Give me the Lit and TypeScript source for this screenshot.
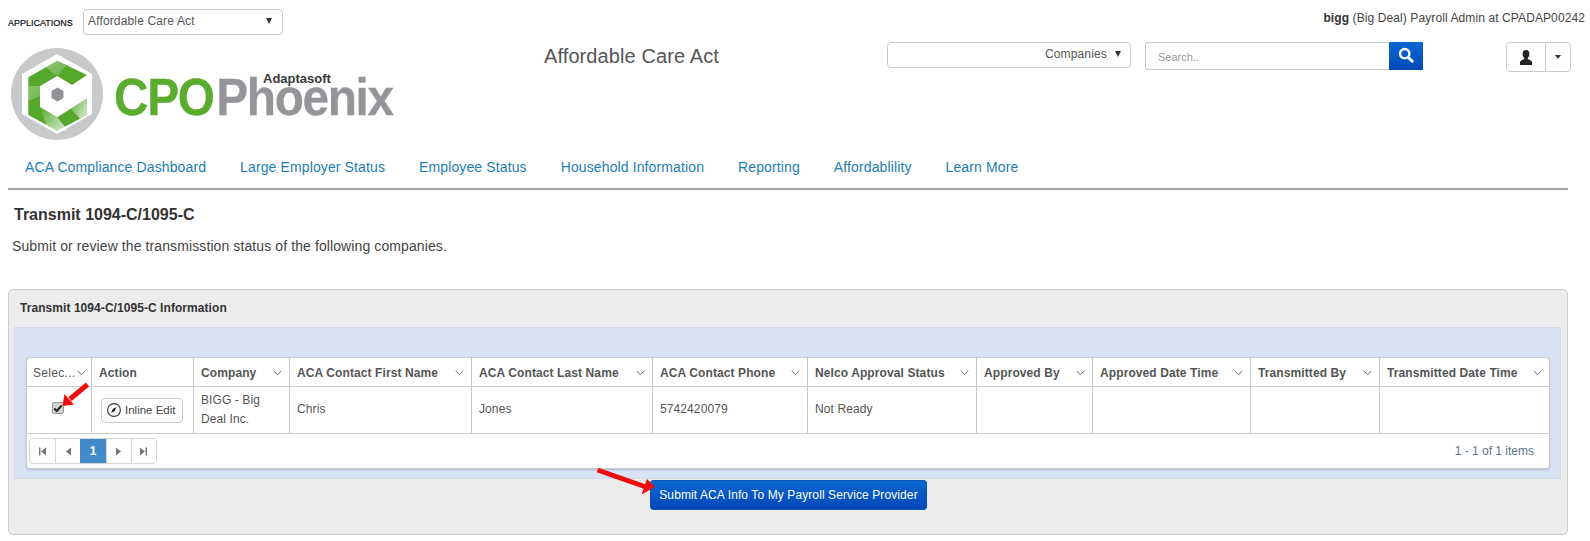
import { LitElement, html, css, svg } from "lit";
import { customElement } from "lit/decorators.js";

const NAV = [
  "ACA Compliance Dashboard",
  "Large Employer Status",
  "Employee Status",
  "Household Information",
  "Reporting",
  "Affordablility",
  "Learn More",
];

const COLUMNS = [
  { title: "Selec...", sort: true, cls: "narrow" },
  { title: "Action", sort: false },
  { title: "Company", sort: true },
  { title: "ACA Contact First Name", sort: true },
  { title: "ACA Contact Last Name", sort: true },
  { title: "ACA Contact Phone", sort: true },
  { title: "Nelco Approval Status", sort: true },
  { title: "Approved By", sort: true },
  { title: "Approved Date Time", sort: true },
  { title: "Transmitted By", sort: true },
  { title: "Transmitted Date Time", sort: true },
];

const chevron = html`<svg class="chev" width="9" height="6" viewBox="0 0 9 6"><path d="M.7 1l3.8 3.6L8.3 1" fill="none" stroke="#666" stroke-width="1"/></svg>`;

const pagerIcons = [
  svg`<path d="M2 1.500h1.400v8H2zM9 1.500v8L4 5.500z"/>`,
  svg`<path d="M8 1.500v8L3 5.500z"/>`,
  svg`<path d="M3 1.500v8l5-4z"/>`,
  svg`<path d="M2 1.500v8l5-4zM7.600 1.500H9v8H7.600z"/>`,
];

@customElement("app-root")
export class AppRoot extends LitElement {
  static styles = css`
    :host {
      display: block;
      position: relative;
      width: 1590px;
      height: 541px;
      background: #fff;
      overflow: hidden;
      font-family: "Liberation Sans", Arial, sans-serif;
      font-size: 12px;
      color: #555;
    }
    .top {
      display: flex;
      justify-content: space-between;
      height: 42px;
      padding: 9px 5px 0 8px;
      box-sizing: border-box;
    }
    .apps {
      display: flex;
      align-items: flex-start;
    }
    .apps-label {
      width: 75px;
      margin-top: 9px;
      font-size: 9px;
      line-height: 10px;
      color: #111;
      -webkit-text-stroke: 0.2px #111;
    }
    .select {
      display: flex;
      align-items: center;
      justify-content: space-between;
      box-sizing: border-box;
      border: 1px solid #ccc;
      border-radius: 4px;
      background: #fff;
      color: #555;
      font-size: 12px;
      letter-spacing: 0.15px;
    }
    .select i {
      width: 0;
      height: 0;
      border-left: 3.500px solid transparent;
      border-right: 3.500px solid transparent;
      border-top: 6px solid #333;
    }
    .app-select {
      width: 200px;
      height: 26px;
      padding: 0 10px 2px 4px;
    }
    .user-line {
      margin-top: 1px;
      font-size: 12px;
      line-height: 16px;
      letter-spacing: 0.1px;
      color: #444;
    }
    .user-line b {
      color: #333;
    }
    .brand {
      display: grid;
      grid-template-columns: 532px 344px 258px 361px 65px;
      height: 98px;
      padding-left: 11px;
    }
    .logo {
      position: relative;
      display: flex;
      align-items: flex-start;
      margin-top: 6px;
    }
    .logo svg {
      width: 93px;
      height: 93px;
      flex: none;
    }
    .wordmark {
      margin: 19px 0 0 10px;
      font-size: 52px;
      line-height: 60px;
      font-weight: 700;
      letter-spacing: -1.500px;
      white-space: nowrap;
      transform: scaleX(0.92);
      transform-origin: left center;
      -webkit-text-stroke: 0.3px currentColor;
      color: #939598;
    }
    .wordmark span {
      color: #5aac2e;
      margin-right: 3px;
    }
    .maker {
      position: absolute;
      left: 252px;
      top: 23px;
      font-size: 13px;
      line-height: 16px;
      font-weight: 700;
      color: #3a3a3a;
    }
    .title {
      padding-left: 1px;
      font-size: 20px;
      line-height: 28px;
      letter-spacing: 0.1px;
      color: #555;
    }
    .company-select {
      width: 244px;
      height: 26px;
      justify-content: flex-end;
      gap: 8px;
      padding: 0 9px 3px 0;
    }
    .search {
      display: flex;
      height: 28px;
    }
    .search-input {
      width: 244px;
      box-sizing: border-box;
      border: 1px solid #ccc;
      border-right: 0;
      border-radius: 3px 0 0 3px;
      padding: 7px 12px;
      font-size: 11px;
      line-height: 14px;
      color: #999;
    }
    .search-btn {
      display: flex;
      width: 34px;
      align-items: center;
      justify-content: center;
      padding-bottom: 3px;
      box-sizing: border-box;
      background: linear-gradient(#0b68d0, #0049b8);
    }
    .user-btn {
      display: flex;
      width: 65px;
      height: 30px;
      box-sizing: border-box;
      border: 1px solid #ccc;
      border-radius: 4px;
    }
    .user-btn div {
      display: flex;
      align-items: center;
      justify-content: center;
    }
    .user-btn .who {
      width: 38px;
      border-right: 1px solid #ccc;
    }
    .user-btn .more {
      flex: 1;
    }
    .user-btn .more i {
      width: 0;
      height: 0;
      border-left: 3.500px solid transparent;
      border-right: 3.500px solid transparent;
      border-top: 4px solid #333;
    }
    nav {
      display: flex;
      gap: 34px;
      height: 50px;
      margin: 0 22px 0 8px;
      padding: 17px 0 0 17px;
      box-sizing: border-box;
      border-bottom: 2px solid #a5a5a5;
    }
    nav a {
      font-size: 14px;
      line-height: 20px;
      color: #1c7db5;
      letter-spacing: 0.12px;
    }
    h2 {
      margin: 15px 0 0 14px;
      font-size: 16px;
      line-height: 20px;
      font-weight: 700;
      color: #333;
    }
    .lead {
      margin: 11px 0 0 12px;
      font-size: 14px;
      line-height: 20px;
      letter-spacing: 0.1px;
      color: #444;
    }
    .panel {
      position: relative;
      margin: 33px 22px 0 8px;
      height: 246px;
      box-sizing: border-box;
      padding: 0 6px 0 5px;
      background: #ececec;
      border: 1px solid #ccc;
      border-radius: 5px;
    }
    .panel-title {
      padding-left: 6px;
      height: 37px;
      font-size: 12px;
      font-weight: 700;
      line-height: 36px;
      letter-spacing: 0.06px;
      color: #333;
    }
    .well {
      height: 152px;
      box-sizing: border-box;
      padding: 29px 10px 0 11px;
      background: #d8e3f4;
      border: 1px solid #d3dcea;
    }
    .grid {
      height: 112px;
      box-sizing: border-box;
      background: #fff;
      border: 1px solid #ccc;
      border-radius: 4px;
      box-shadow: 0 1px 2px rgba(0, 0, 0, 0.2);
    }
    .row {
      display: grid;
      box-sizing: border-box;
      grid-template-columns: 64px 102px 96px 182px 181px 155px 169px 116px 158px 129px 170px;
    }
    .head {
      height: 29px;
      border-bottom: 1px solid #ccc;
    }
    .body {
      height: 47px;
      border-bottom: 1px solid #ccc;
    }
    .th,
    .td {
      display: flex;
      align-items: center;
      box-sizing: border-box;
      padding: 0 7px;
      border-left: 1px solid #ccc;
      min-width: 0;
      letter-spacing: 0.1px;
    }
    .th:first-child,
    .td:first-child {
      border-left: 0;
    }
    .th {
      justify-content: space-between;
      padding-top: 1px;
      font-weight: 700;
      color: #555;
      white-space: nowrap;
    }
    .th.narrow {
      font-weight: 400;
      padding: 1px 5px 0 6px;
      letter-spacing: 0.3px;
    }
    .td {
      padding-bottom: 1px;
      line-height: 19px;
      color: #555;
    }
    .td.check {
      justify-content: center;
      padding: 0 2px 4px 0;
    }
    .td.edit {
      padding-bottom: 0;
    }
    .checkbox {
      display: flex;
      align-items: center;
      justify-content: center;
      width: 12px;
      height: 12px;
      box-sizing: border-box;
      background: #d4d4d4;
      border: 1px solid #999;
      border-radius: 2px;
    }
    .inline-edit {
      display: flex;
      align-items: center;
      gap: 4px;
      width: 82px;
      height: 25px;
      margin-left: 2px;
      padding: 0 0 0 5px;
      box-sizing: border-box;
      background: #fff;
      border: 1px solid #ccc;
      border-radius: 4px;
      font-size: 11.500px;
      letter-spacing: 0;
      white-space: nowrap;
      color: #444;
    }
    .foot {
      display: flex;
      align-items: center;
      justify-content: space-between;
      height: 34px;
      padding: 0 15px 0 2px;
      box-sizing: border-box;
    }
    .pager {
      display: flex;
      height: 26px;
      box-sizing: border-box;
      border: 1px solid #d5d5d5;
      border-radius: 4px;
    }
    .pager div {
      display: flex;
      align-items: center;
      justify-content: center;
      width: 25.200px;
      border-left: 1px solid #d5d5d5;
      box-sizing: border-box;
    }
    .pager div:first-child {
      border-left: 0;
    }
    .pager svg {
      fill: #777;
    }
    .pager .current {
      background: #428bca;
      border-left: 0;
      color: #fff;
      font-weight: 700;
    }
    .count {
      color: #5c7488;
    }
    .actions {
      display: flex;
      justify-content: center;
      padding: 1px 0 0 2px;
    }
    .submit {
      width: 277px;
      height: 30px;
      box-sizing: border-box;
      border: 1px solid #0a55b5;
      border-radius: 3px;
      background: linear-gradient(#0b68d0, #0046b8);
      color: #fff;
      font-size: 12px;
      line-height: 28px;
      letter-spacing: 0.1px;
      text-align: center;
    }
    .arrow {
      position: absolute;
      left: 0;
      top: 0;
      pointer-events: none;
    }
  `;

  render() {
    return html`
      <div class="top">
        <div class="apps">
          <div class="apps-label">APPLICATIONS</div>
          <div class="select app-select">Affordable Care Act<i></i></div>
        </div>
        <div class="user-line"><b>bigg</b> (Big Deal) Payroll Admin at CPADAP00242</div>
      </div>

      <div class="brand">
        <div class="logo">
          ${this.renderMark()}
          <div class="wordmark"><span>CPO</span>Phoenix</div>
          <div class="maker">Adaptasoft</div>
        </div>
        <div class="title">Affordable Care Act</div>
        <div class="select company-select">Companies<i></i></div>
        <div class="search">
          <div class="search-input">Search..</div>
          <div class="search-btn">
            <svg width="16" height="16" viewBox="0 0 16 16"><circle cx="6.700" cy="6.700" r="4.700" fill="none" stroke="#fff" stroke-width="2.400"/><path d="M10.200 10.200l4 4" stroke="#fff" stroke-width="3" stroke-linecap="round"/></svg>
          </div>
        </div>
        <div class="user-btn">
          <div class="who">
            <svg width="14" height="15" viewBox="0 0 14 15"><path d="M7 0c2.200 0 3.400 1.600 3.400 3.700 0 1.700-.7 3.300-1.500 4.200-.3.400-.2 1 .3 1.300 1.500.7 3.800 1.300 3.800 3.100V15H1v-2.700c0-1.800 2.300-2.400 3.800-3.100.5-.3.600-.9.300-1.300-.8-.9-1.500-2.500-1.500-4.200C3.600 1.600 4.800 0 7 0z" fill="#222"/></svg>
          </div>
          <div class="more"><i></i></div>
        </div>
      </div>

      <nav>${NAV.map((item) => html`<a>${item}</a>`)}</nav>

      <h2>Transmit 1094-C/1095-C</h2>
      <p class="lead">Submit or review the transmisstion status of the following companies.</p>

      <section class="panel">
        <div class="panel-title">Transmit 1094-C/1095-C Information</div>
        <div class="well">
          <div class="grid">
            <div class="row head">
              ${COLUMNS.map(
                (c) => html`<div class="th ${c.cls ?? ""}">${c.title}${c.sort ? chevron : ""}</div>`
              )}
            </div>
            <div class="row body">
              <div class="td check">
                <span class="checkbox">
                  <svg width="10" height="9" viewBox="0 0 10 9"><path d="M1.200 4.500l2.500 2.500 5-5.500" fill="none" stroke="#222" stroke-width="2"/></svg>
                </span>
              </div>
              <div class="td edit">
                <div class="inline-edit">
                  <svg width="14" height="14" viewBox="1 1 14 14"><circle cx="8" cy="8" r="6.400" fill="none" stroke="#333" stroke-width="1.100"/><path d="M5.200 10.800l1.500-3.800 3.900-1.900-1.800 3.900z" fill="#222"/></svg>
                  Inline Edit
                </div>
              </div>
              <div class="td">BIGG - Big Deal Inc.</div>
              <div class="td">Chris</div>
              <div class="td">Jones</div>
              <div class="td">5742420079</div>
              <div class="td">Not Ready</div>
              <div class="td"></div>
              <div class="td"></div>
              <div class="td"></div>
              <div class="td"></div>
            </div>
            <div class="foot">
              <div class="pager">
                <div>${this.pagerIcon(0)}</div>
                <div>${this.pagerIcon(1)}</div>
                <div class="current">1</div>
                <div>${this.pagerIcon(2)}</div>
                <div>${this.pagerIcon(3)}</div>
              </div>
              <div class="count">1 - 1 of 1 items</div>
            </div>
          </div>
        </div>
        <div class="actions">
          <div class="submit">Submit ACA Info To My Payroll Service Provider</div>
        </div>
      </section>

      <svg class="arrow" width="1590" height="541" viewBox="0 0 1590 541">
        <path d="M87.500 384.500L70 399" stroke="#f00d0d" stroke-width="5" fill="none"/>
        <path d="M62.500 406l2-12 9.500 10.500z" fill="#f00d0d"/>
        <path d="M597.500 470L646 487" stroke="#f00d0d" stroke-width="5" fill="none"/>
        <path d="M655 487l-8-8-5.500 15.500z" fill="#f00d0d"/>
      </svg>
    `;
  }

  private pagerIcon(i: number) {
    return html`<svg width="11" height="11" viewBox="0 0 11 11">${pagerIcons[i]}</svg>`;
  }

  // logo mark, coordinates follow the picture (page offset 11,48)
  private renderMark() {
    return html`<svg viewBox="11 48 93 93">
      <defs>
        <linearGradient id="sheen" x1="0" y1="0" x2="1" y2="1">
          <stop offset="0" stop-color="#fff" stop-opacity="0.45"/>
          <stop offset="1" stop-color="#fff" stop-opacity="0"/>
        </linearGradient>
        <linearGradient id="fade" x1="0" y1="0" x2="1" y2="0.6">
          <stop offset="0" stop-color="#fff" stop-opacity="0"/>
          <stop offset="1" stop-color="#fff" stop-opacity="0.7"/>
        </linearGradient>
      </defs>
      <circle cx="57" cy="94" r="46" fill="#c8c9cb"/>
      <path d="M57 54l35 20v40l-35 20-35-20V74z" fill="#fff"/>
      <path d="M57.300 60.700L87 75 72 85 57.300 76 40 86v21l17.300 10.300L87 98.300V115l-29.700 15.700L28.300 115V77.300z" fill="#56a82d"/>
      <path d="M46 67l11-6.300 9.500 4.600-9 10.700-4-2.500zM28.300 86L40 86v10l-11.700 5z" fill="url(#sheen)"/>
      <path d="M40 107l17.300 10.300L68 130.500l-10.700.2-11-6z" fill="url(#fade)"/>
      <path d="M70 108l17-9.700V115l-7 3.700z" fill="url(#fade)"/>
      <path d="M57.500 87.500l6 3.500v7l-6 3.500-6-3.500v-7z" fill="#8f9194"/>
    </svg>`;
  }
}
